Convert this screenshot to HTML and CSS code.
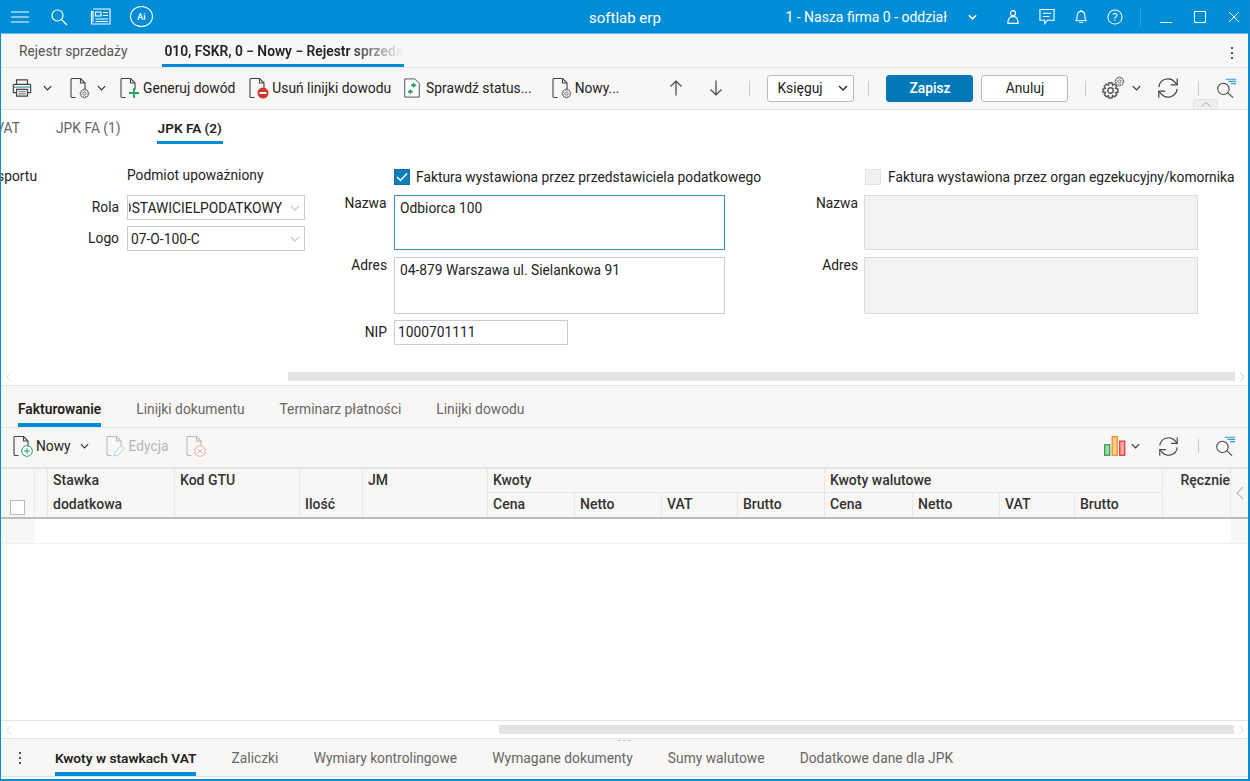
FILE: index.html
```html
<!DOCTYPE html>
<html lang="pl">
<head>
<meta charset="utf-8">
<title>softlab erp</title>
<link rel="stylesheet" href="styles.css">
</head>
<body>
<svg class="defs" width="0" height="0" aria-hidden="true">
  <defs>
    <symbol id="sheet" viewBox="0 0 20 20"><path d="M5.500 19.500H2a1 1 0 0 1-1-1v-17a1 1 0 0 1 1-1h8.500l4.500 4.500v6.500M10.500.5V5H15" fill="none" stroke="currentColor" stroke-width="1.100"/></symbol>
    <symbol id="sync" viewBox="0 0 24 24"><g fill="none" stroke="#444" stroke-width="1.300"><path d="M2 11a10 10 0 0 1 17.500-5.500l2.500 3"/><path d="M22 1.500v7h-7"/><path d="M22 13a10 10 0 0 1-17.500 5.500l-2.500-3"/><path d="M2 22.500v-7h7"/></g></symbol>
    <symbol id="searchlist" viewBox="0 0 24 24"><circle cx="8.500" cy="13" r="6.500" fill="none" stroke="#444" stroke-width="1.200"/><path d="M13.500 17.500l6 5.500" stroke="#444" stroke-width="1.200"/><path d="M11 2h12M14 4.500h9M17 7h6" stroke="#2e9bdc" stroke-width="1.300"/></symbol>
    <symbol id="gear" viewBox="0 0 16 16"><g fill="none" stroke="#555" stroke-width="1.200"><circle cx="8" cy="8" r="2.300"/><path d="M6.700 1.500h2.600l.4 2 1.700-.9 1.900 1.900-1 1.700 2 .5v2.600l-2 .4 1 1.700-1.900 1.900-1.700-1-.4 2H6.700l-.4-2-1.700 1-1.900-1.900 1-1.700-2-.4V6.700l2-.5-1-1.700 1.900-1.900 1.700.9z"/></g></symbol>
    <symbol id="chev" viewBox="0 0 10 6"><path d="M1 1l4 4 4-4" fill="none" stroke="currentColor" stroke-width="1.300"/></symbol>
  </defs>
</svg>
<div class="app">
  <header class="titlebar">
    <div class="tb-left">
      <svg class="ic-menu" width="20" height="14" viewBox="0 0 20 14"><path d="M1 2h18M1 7h18M1 12h18" stroke="#fff" stroke-width="1.200"/></svg>
      <svg class="ic-search" width="18" height="18" viewBox="0 0 18 18"><circle cx="7.500" cy="7.500" r="5.500" fill="none" stroke="#fff" stroke-width="1.200"/><path d="M11.500 11.500l5.500 5.500" stroke="#fff" stroke-width="1.300"/></svg>
      <svg class="ic-news" width="21" height="17" viewBox="0 0 21 17"><g fill="none" stroke="#fff" stroke-width="1.100"><path d="M3 1h17v15H1.500V3.500H3V14"/><path d="M5.500 4h5.500v4H5.500z"/><path d="M13 4.500h5M13 7.500h5M5.500 11h12.500M5.500 13.500h12.500"/></g></svg>
      <span class="ai">Ai</span>
    </div>
    <div class="tb-title">softlab erp</div>
    <div class="tb-right">
      <span class="company">1 - Nasza firma 0 - oddział</span>
      <svg class="co-chev" width="9" height="6" viewBox="0 0 10 6"><path d="M1 1l4 4 4-4" fill="none" stroke="#fff" stroke-width="1.800"/></svg>
      <svg class="ti" width="12" height="18" viewBox="0 0 14 18"><g fill="none" stroke="#fff" stroke-width="1.300"><circle cx="7" cy="4.500" r="3"/><path d="M1 16.500c0-4 2-7 4-8h4c2 1 4 4 4 8z"/></g></svg>
      <svg class="ti" width="16" height="17" viewBox="0 0 17 17"><g fill="none" stroke="#fff" stroke-width="1.200"><path d="M1 1h15v11.500H9L6 16v-3.500H1z"/><path d="M4 5h9M4 8.500h7"/></g></svg>
      <svg class="ti" width="12" height="17" viewBox="0 0 14 17"><g fill="none" stroke="#fff" stroke-width="1.300"><path d="M1 13.500c1.500-1 1.500-3 1.500-6s2-5 4.500-5 4.500 2 4.500 5 0 5 1.500 6z"/><path d="M7 .5v2M5 15.500h4"/></g></svg>
      <svg class="ti" width="16" height="16" viewBox="0 0 17 17"><circle cx="8.500" cy="8.500" r="7.500" fill="none" stroke="#fff" stroke-width="1.100"/><text x="8.500" y="12.500" text-anchor="middle" class="q">?</text></svg>
      <span class="tb-sep"></span>
      <svg class="win-min" width="12" height="12" viewBox="0 0 12 12"><path d="M0 11.500h12" stroke="#fff" stroke-width="1"/></svg>
      <svg class="win-max" width="12" height="12" viewBox="0 0 12 12"><path d="M.5.500h11v11H.5z" fill="none" stroke="#fff" stroke-width="1"/></svg>
      <svg class="win-close" width="12" height="12" viewBox="0 0 12 12"><path d="M1 1l10 10M11 1L1 11" stroke="#fff" stroke-width="1"/></svg>
    </div>
  </header>

  <nav class="doctabs">
    <span class="doctab">Rejestr sprzedaży</span>
    <span class="doctab active"><span class="fade">010, FSKR, 0 − Nowy − Rejestr sprzedaży</span></span>
    <span class="kebab"><i></i><i></i><i></i></span>
  </nav>

  <div class="toolbar">
    <svg class="tool-print" width="20" height="20" viewBox="0 0 22 22"><g fill="none" stroke="#444" stroke-width="1.300"><path d="M5 7V2h12v5"/><path d="M5 16H1.500V8a1 1 0 0 1 1-1h17a1 1 0 0 1 1 1v8H17"/><path d="M5 12.500h12V20H5z"/><path d="M2 10h18" stroke="#3a8fc8"/><path d="M7 15h8M7 17.500h8" stroke="#888"/></g></svg>
    <svg class="chev-s c1" width="9" height="6"><use href="#chev"/></svg>
    <span class="ticon gearsheet"><svg width="20" height="20"><use href="#sheet"/></svg><svg class="over" width="11" height="11"><use href="#gear"/></svg></span>
    <svg class="chev-s c2b" width="9" height="6"><use href="#chev"/></svg>
    <span class="tbtn b-gen"><span class="ticon"><svg width="20" height="20"><use href="#sheet"/></svg><svg class="over" width="12" height="12" viewBox="0 0 12 12"><path d="M6 1v10M1 6h10" stroke="#1ba261" stroke-width="1.800"/></svg></span>Generuj dowód</span>
    <span class="tbtn b-del"><span class="ticon"><svg width="20" height="20"><use href="#sheet"/></svg><svg class="over" width="12" height="12" viewBox="0 0 12 12"><circle cx="6" cy="6" r="5.500" fill="#d9342b"/><path d="M2.500 6h7" stroke="#fff" stroke-width="2"/></svg></span>Usuń linijki dowodu</span>
    <span class="tbtn b-chk"><svg class="ic-chk" width="18" height="20" viewBox="0 0 18 22"><path d="M1 1h11l5 5v15H1z" fill="#fff" stroke="#555" stroke-width="1.100"/><path d="M4 15l4-3v2h2v2H8v2zM14 8l-4 3V9H8V7h2V5z" fill="#1ba261"/></svg>Sprawdź status...</span>
    <span class="tbtn b-new"><span class="ticon"><svg width="20" height="20"><use href="#sheet"/></svg><svg class="over" width="11" height="11"><use href="#gear"/></svg></span>Nowy...</span>
    <svg class="arrow a1" width="14" height="16" viewBox="0 0 14 16"><path d="M7 15.500V1M1.500 6.500L7 1l5.500 5.500" fill="none" stroke="#444" stroke-width="1.200"/></svg>
    <svg class="arrow a2" width="14" height="16" viewBox="0 0 14 16"><path d="M7 .5V15M1.500 9.500L7 15l5.500-5.500" fill="none" stroke="#444" stroke-width="1.200"/></svg>
    <span class="vsep s1"></span>
    <span class="select-btn">Księguj<svg width="10" height="6"><use href="#chev"/></svg></span>
    <span class="vsep s2"></span>
    <span class="btn primary">Zapisz</span>
    <span class="btn">Anuluj</span>
    <span class="vsep s3"></span>
    <svg class="gears" width="24" height="24" viewBox="0 0 24 24"><use href="#gear" x="0" y="5" width="19" height="19"/><use href="#gear" x="13" y="0" width="11" height="11"/></svg>
    <svg class="chev-s gc" width="9" height="6"><use href="#chev"/></svg>
    <svg class="sync" width="22" height="22"><use href="#sync"/></svg>
    <span class="vsep s4"></span>
    <svg class="slist" width="21" height="22" viewBox="0 0 24 24"><use href="#searchlist"/></svg>
    <span class="collapse"><svg width="10" height="5" viewBox="0 0 10 5"><path d="M.5 4.500L5 .5l4.500 4" fill="none" stroke="#aaa" stroke-width="1"/></svg></span>
  </div>

  <nav class="formtabs">
    <span class="ft cut">VAT</span>
    <span class="ft f1">JPK FA (1)</span>
    <span class="ft active">JPK FA (2)</span>
  </nav>

  <section class="form">
    <span class="cut-label">transportu</span>
    <span class="sect-title">Podmiot upoważniony</span>
    <label class="chk-row c2"><span class="chk on"><svg width="12" height="10" viewBox="0 0 12 10"><path d="M1 5l3.500 3.500L11 1.500" fill="none" stroke="#fff" stroke-width="1.500"/></svg></span>Faktura wystawiona przez przedstawiciela podatkowego</label>
    <label class="chk-row c3"><span class="chk off"></span>Faktura wystawiona przez organ egzekucyjny/komornika</label>

    <div class="role-block">
      <span class="lbl">Rola</span>
      <span class="combo"><span class="combo-text clip">PRZEDSTAWICIELPODATKOWY</span><svg width="10" height="6"><use href="#chev"/></svg></span>
      <span class="lbl">Logo</span>
      <span class="combo"><span class="combo-text">07-O-100-C</span><svg width="10" height="6"><use href="#chev"/></svg></span>
    </div>
    <span class="lbl top l-n1">Nazwa</span>
    <div class="area focus a-n1">Odbiorca 100</div>
    <span class="lbl top l-n2">Nazwa</span>
    <div class="area disabled a-n2"></div>

    <span class="lbl top l-a1">Adres</span>
    <div class="area a-a1">04-879 Warszawa ul. Sielankowa 91</div>
    <span class="lbl top l-a2">Adres</span>
    <div class="area disabled a-a2"></div>

    <span class="lbl l-nip">NIP</span>
    <div class="nip">1000701111</div>
  </section>

  <div class="hscroll upper">
    <svg class="sl" width="6" height="10" viewBox="0 0 6 10"><path d="M5 .5L1 5l4 4.500" fill="none" stroke="#ddd"/></svg>
    <span class="track t-up"></span>
    <svg class="sr" width="6" height="10" viewBox="0 0 6 10"><path d="M1 .5L5 5 1 9.500" fill="none" stroke="#ccc"/></svg>
  </div>

  <nav class="subtabs">
    <span class="st active">Fakturowanie</span>
    <span class="st">Linijki dokumentu</span>
    <span class="st">Terminarz płatności</span>
    <span class="st">Linijki dowodu</span>
  </nav>

  <div class="gridbar">
    <span class="tbtn nowy"><span class="ticon"><svg width="20" height="20"><use href="#sheet"/></svg><svg class="over" width="12" height="12" viewBox="0 0 12 12"><circle cx="6" cy="6" r="5.300" fill="#fff" stroke="#1ba261"/><path d="M6 3v6M3 6h6" stroke="#1ba261"/></svg></span>Nowy</span>
    <svg class="chev-s nc" width="9" height="6"><use href="#chev"/></svg>
    <span class="tbtn dim ed"><span class="ticon light"><svg width="20" height="20"><use href="#sheet"/></svg><svg class="over" width="13" height="13" viewBox="0 0 14 14"><path d="M1 13l1-4 7-7 3 3-7 7z" fill="#fff" stroke="#9cc8e6"/></svg></span>Edycja</span>
    <span class="ticon light del"><svg width="20" height="20"><use href="#sheet"/></svg><svg class="over" width="12" height="12" viewBox="0 0 12 12"><circle cx="6" cy="6" r="5.300" fill="#fff" stroke="#eea6a6"/><path d="M3.500 3.500l5 5M8.500 3.500l-5 5" stroke="#eea6a6"/></svg></span>
    <svg class="bars" width="22" height="20" viewBox="0 0 22 20"><rect x=".7" y="8.700" width="5" height="10.600" fill="#a8d8b0" stroke="#2aa64a" stroke-width="1.300"/><rect x="8.200" y=".7" width="5" height="18.600" fill="#fad08a" stroke="#ef8a2c" stroke-width="1.300"/><rect x="15.700" y="5.200" width="5" height="14.100" fill="#f2a8a8" stroke="#e23b3b" stroke-width="1.300"/></svg>
    <svg class="chev-s bc" width="9" height="6"><use href="#chev"/></svg>
    <svg class="sync g" width="21" height="21"><use href="#sync"/></svg>
    <span class="vsep g"></span>
    <svg class="slist" width="21" height="22" viewBox="0 0 24 24"><use href="#searchlist"/></svg>
  </div>

  <div class="table">
    <div class="th span2 tick col1"><span class="box"></span></div>
    <div class="th span2 col2"></div>
    <div class="th span2 stack col3"><span>Stawka</span><span>dodatkowa</span></div>
    <div class="th span2 up col4">Kod GTU</div>
    <div class="th span2 down col5">Ilość</div>
    <div class="th span2 up col6">JM</div>
    <div class="th group g1">Kwoty</div>
    <div class="th group g2">Kwoty walutowe</div>
    <div class="th span2 up right col15">Ręcznie</div>
    <div class="th span2 side col16"><svg width="8" height="14" viewBox="0 0 8 14"><path d="M7 1L1 7l6 6" fill="none" stroke="#bbb" stroke-width="1.100"/></svg></div>
    <div class="th sub">Cena</div><div class="th sub">Netto</div><div class="th sub">VAT</div><div class="th sub">Brutto</div>
    <div class="th sub">Cena</div><div class="th sub">Netto</div><div class="th sub">VAT</div><div class="th sub">Brutto</div>
  </div>
  <div class="row-empty"><span class="rowhead"></span><span class="rowcell"></span><span class="rowend"></span></div>
  <div class="grid-fill"></div>

  <div class="hscroll lower">
    <svg class="sl" width="6" height="10" viewBox="0 0 6 10"><path d="M5 .5L1 5l4 4.500" fill="none" stroke="#ddd"/></svg>
    <span class="track t-low"></span>
    <svg class="sr" width="6" height="10" viewBox="0 0 6 10"><path d="M1 .5L5 5 1 9.500" fill="none" stroke="#ddd"/></svg>
  </div>

  <nav class="bottomtabs">
    <span class="grip"></span>
    <span class="kebab"><i></i><i></i><i></i></span>
    <span class="bt active">Kwoty w stawkach VAT</span>
    <span class="bt">Zaliczki</span>
    <span class="bt">Wymiary kontrolingowe</span>
    <span class="bt">Wymagane dokumenty</span>
    <span class="bt">Sumy walutowe</span>
    <span class="bt">Dodatkowe dane dla JPK</span>
  </nav>
</div>
</body>
</html>
```

FILE: styles.css
```css
* { box-sizing: border-box; }
html, body { margin: 0; padding: 0; }
body { width: 1250px; height: 781px; overflow: hidden; font-family: Roboto, "Liberation Sans", sans-serif; font-size: 13.8px; color: #222; background: #fff; }
.defs { position: absolute; }
svg { display: block; flex: none; }

.app { width: 1250px; height: 781px; display: flex; flex-direction: column; border: 1px solid #0a8bd3; border-width: 0 2px 2px 1px; overflow: hidden; background: #fff; }

/* title bar */
.titlebar { flex: none; height: 34px; margin: 0 -2px 0 -1px; background: #018dd6; border-bottom: 1px solid #6cbde8; position: relative; display: flex; align-items: center; color: #fff; padding-left: 10px; }
.tb-left { display: flex; align-items: center; }
.ic-search { margin-left: 20px; }
.ic-news { margin-left: 22px; }
.ai { margin-left: 19px; width: 23px; height: 21px; border: 1.200px solid #fff; border-radius: 50%; font-size: 9px; font-weight: 500; display: flex; align-items: center; justify-content: center; }
.tb-title { position: absolute; left: 589px; top: 9px; font-size: 15px; }
.tb-right { margin-left: auto; display: flex; align-items: center; padding-right: 10px; }
.company { font-size: 14px; margin-right: 21px; }
.co-chev { margin-right: 30px; }
.ti { margin-right: 20px; }
.q { font: 12px Roboto, sans-serif; fill: #fff; }
.tb-sep { width: 1px; height: 20px; background: #2aa0de; margin: 0 19px 0 -3px; }
.win-min, .win-max { margin-right: 22px; }

/* document tabs */
.doctabs { flex: none; height: 34px; background: #f8f7f5; border-bottom: 1px solid #e6e5e3; display: flex; position: relative; padding-left: 18px; }
.doctab { color: #555; padding-top: 9px; }
.doctab.active { margin-left: 35px; width: 242px; padding: 9px 0 0 2px; font-weight: 600; color: #222; border-bottom: 3px solid #018dd6; height: 33px; }
.fade { display: block; width: 239px; white-space: nowrap; overflow: hidden; -webkit-mask-image: linear-gradient(90deg, #000 77%, transparent 100%); mask-image: linear-gradient(90deg, #000 77%, transparent 100%); }
.kebab { display: flex; flex-direction: column; gap: 3px; }
.kebab i { width: 2px; height: 2px; background: #555; display: block; }
.doctabs .kebab { position: absolute; left: 1230px; top: 13px; }

/* main toolbar */
.toolbar { flex: none; height: 42px; background: #f8f7f5; border-bottom: 1px solid #e3e2e0; display: flex; align-items: center; position: relative; padding: 0 0 1px 11px; }
.chev-s { color: #333; }
.c1 { margin-left: 11px; }
.gearsheet { margin-left: 18px; }
.c2b { margin-left: 7px; }
.ticon { position: relative; width: 20px; height: 20px; flex: none; display: block; color: #444; }
.ticon .over { position: absolute; right: 0; bottom: -1px; }
.ticon.light { color: #bbb; }
.tbtn { display: flex; align-items: center; gap: 3px; white-space: nowrap; }
.b-gen { margin-left: 14px; }
.b-del { margin-left: 14px; }
.b-chk { margin-left: 12px; }
.ic-chk { margin-right: 2px; }
.b-new { margin-left: 20px; }
.a1 { margin-left: 50px; }
.a2 { margin-left: 26px; }
.vsep { width: 1px; height: 15px; background: #ccc; flex: none; }
.s1 { margin-left: 26px; }
.select-btn { margin-left: 17px; width: 87px; height: 27px; background: #fff; border: 1px solid #bbb; border-radius: 3px; display: flex; align-items: center; justify-content: space-between; padding: 0 5px 0 9px; }
.s2 { margin-left: 14px; }
.btn { width: 87px; height: 27px; border-radius: 3px; border: 1px solid #bbb; background: #fff; display: flex; align-items: center; justify-content: center; margin-left: 8px; }
.btn.primary { margin-left: 17px; background: #0278b8; border-color: #0278b8; color: #fff; font-weight: 500; }
.s3 { margin-left: 17px; }
.gears { margin-left: 15px; }
.gc { margin-left: 7px; }
.sync { margin-left: 16px; }
.s4 { margin-left: 19px; }
.slist { margin-left: 17px; }
.collapse { position: absolute; left: 1192px; top: 31px; width: 25px; height: 10px; background: #f0efed; border: 1px solid #e3e2e0; border-bottom: 0; border-radius: 3px 3px 0 0; display: flex; justify-content: center; align-items: center; }

/* form tabs */
.formtabs { flex: none; height: 34px; display: flex; background: #fff; }
.ft { color: #666; padding-top: 10px; height: 34px; white-space: nowrap; }
.ft.cut { width: 19px; overflow: hidden; direction: rtl; }
.f1 { margin-left: 36px; }
.ft.active { margin-left: 36px; color: #222; font-weight: 600; border-bottom: 3px solid #018dd6; padding: 10px 0 0 1px; width: 66px; font-size: 13.6px; }

/* form */
.form { flex: none; height: 226px; padding-top: 24px; display: grid; grid-template-columns: 118px 8px 178px 89px 331px 139px 334px; grid-template-rows: 17px 10px 55px 7px 57px 6px 25px; }
.cut-label { grid-column: 1; grid-row: 1; width: 36px; overflow: hidden; direction: rtl; white-space: nowrap; line-height: 17px; }
.sect-title { grid-column: 3 / 5; grid-row: 1; line-height: 15px; }
.chk-row { display: flex; align-items: center; gap: 6px; white-space: nowrap; grid-row: 1; }
.chk-row.c2 { grid-column: 5; }
.chk-row.c3 { grid-column: 7; gap: 7px; }
.chk { width: 16px; height: 16px; flex: none; display: flex; align-items: center; justify-content: center; }
.chk.on { background: #0f7ebd; border: 1px solid #0f6fa8; }
.chk.off { background: #f1f1f1; border: 1px solid #e2e2e2; margin-left: 1px; }
.role-block { grid-column: 1 / 4; grid-row: 3; display: grid; grid-template-columns: 118px 178px; column-gap: 8px; grid-template-rows: 25px 25px; row-gap: 6px; }
.lbl { text-align: right; white-space: nowrap; }
.role-block .lbl { line-height: 25px; }
.lbl.top { padding-right: 7px; line-height: 16px; }
.lbl.l-n1 { padding-right: 7.500px; }
.l-n1 { grid-column: 4; grid-row: 3; }
.l-n2 { grid-column: 6; grid-row: 3; }
.lbl.l-n2, .lbl.l-a2 { padding-right: 6px; }
.l-a1 { grid-column: 4; grid-row: 5; }
.l-a2 { grid-column: 6; grid-row: 5; }
.a-n1 { grid-column: 5; grid-row: 3; }
.a-n2 { grid-column: 7; grid-row: 3; }
.a-a1 { grid-column: 5; grid-row: 5; }
.a-a2 { grid-column: 7; grid-row: 5; }
.l-nip { grid-column: 4; grid-row: 7; padding-right: 7px; line-height: 25px; }
.combo { width: 178px; height: 25px; border: 1px solid #ccc; display: flex; align-items: center; justify-content: space-between; padding: 0 4px 0 3px; overflow: hidden; }
.combo svg { color: #ccc; }
.combo-text { white-space: nowrap; }
.combo-text.clip { width: 153px; margin-left: -2px; overflow: hidden; direction: rtl; }
.area { border: 1px solid #ccc; padding: 3px 5px; line-height: 18px; }
.area.focus { border-color: #3d8fba; }
.area.disabled { background: #f2f2f2; border-color: #dcdcdc; }
.nip { grid-column: 5; grid-row: 7; width: 174px; height: 25px; border: 1px solid #ccc; padding: 0 3px; line-height: 23px; }

/* scrollbars */
.hscroll { flex: none; display: flex; align-items: center; background: #fff; padding-left: 5px; }
.hscroll.upper { height: 16px; border-bottom: 1px solid #e6e5e3; padding-bottom: 2px; }
.hscroll.lower { height: 19px; border-top: 1px solid #e6e5e3; border-bottom: 1px solid #e6e5e3; }
.track { height: 9px; background: #e3e3e3; flex: none; }
.t-up { margin-left: 276px; width: 947px; }
.t-low { margin-left: 487px; width: 735px; }
.sr { margin-left: 4px; }

/* sub tabs */
.subtabs { flex: none; height: 42px; background: #f8f7f5; border-bottom: 1px solid #e6e5e3; display: flex; padding-left: 17px; }
.st { color: #666; padding-top: 15px; margin-right: 35px; white-space: nowrap; }
.st.active { color: #222; font-weight: 600; border-bottom: 4px solid #018dd6; height: 41px; }

/* grid bar */
.gridbar { flex: none; height: 39px; background: #f8f7f5; display: flex; align-items: center; padding: 0 0 3px 12px; }
.nc { margin-left: 9px; }
.tbtn.dim { color: #b5b5b5; }
.ed { margin-left: 17px; }
.del { margin-left: 17px; }
.bars { margin-left: auto; }
.bc { margin-left: 5px; }
.sync.g { margin-left: 18px; }
.vsep.g { margin-left: 19px; height: 14px; }
.gridbar .slist { margin-left: 16px; margin-right: 12px; }

/* table */
.table { flex: none; height: 52px; display: grid; grid-template-columns: 34px 13px 127px 125px 63px 125px 87px 87px 76px 87px 88px 87px 75px 88px 68px 17px; grid-template-rows: 24px 24px; background: #f8f7f5; border-top: 2px solid #e4e3e1; border-bottom: 2px solid #bdbcba; font-size: 14px; }
.th { border-right: 1px solid #e9e8e6; padding: 2px 5px 0; white-space: nowrap; overflow: hidden; color: #333; font-weight: 500; line-height: 18px; }
.span2 { grid-row: 1 / 3; }
.col1 { grid-column: 1; }
.col2 { grid-column: 2; }
.col3 { grid-column: 3; }
.col4 { grid-column: 4; }
.col5 { grid-column: 5; }
.col6 { grid-column: 6; }
.g1 { grid-column: 7 / 11; grid-row: 1; }
.g2 { grid-column: 11 / 15; grid-row: 1; }
.col15 { grid-column: 15; }
.col16 { grid-column: 16; }
.th.tick { display: flex; align-items: flex-end; justify-content: center; padding: 0 1px 2px 0; }
.box { width: 15px; height: 15px; border: 1px solid #bbb; background: #fff; display: block; }
.stack { display: flex; flex-direction: column; gap: 6px; }
.down { display: flex; align-items: flex-end; padding-bottom: 4px; }
.th.group { border-bottom: 1px solid #e9e8e6; }
.right { text-align: right; padding-right: 0; padding-left: 0; }
.th.side { padding: 0; display: flex; align-items: center; justify-content: center; border-right: 0; }
.th.sub { grid-row: 2; }
.row-empty { flex: none; height: 25px; display: flex; border-bottom: 1px solid #f0f0ee; }
.rowhead { width: 34px; background: #f8f7f5; }
.rowcell { flex: 1; }
.rowend { width: 17px; background: #f8f7f5; }
.grid-fill { flex: 1; background: #fff; }

/* bottom tabs */
.bottomtabs { flex: none; height: 38px; margin-bottom: 2px; background: #f8f7f5; border-bottom: 1px solid #e3e2e0; display: flex; position: relative; }
.bottomtabs .kebab { margin: 13px 0 0 18px; }
.grip { position: absolute; left: 617px; top: 1px; width: 14px; height: 1px; background: repeating-linear-gradient(90deg, #bbb 0 3px, transparent 3px 5px); }
.bt { color: #666; padding-top: 11px; margin-right: 35.200px; white-space: nowrap; }
.bt.active { color: #222; font-weight: 600; font-size: 13.7px; margin-left: 34px; border-bottom: 4px solid #018dd6; height: 37px; }
```
